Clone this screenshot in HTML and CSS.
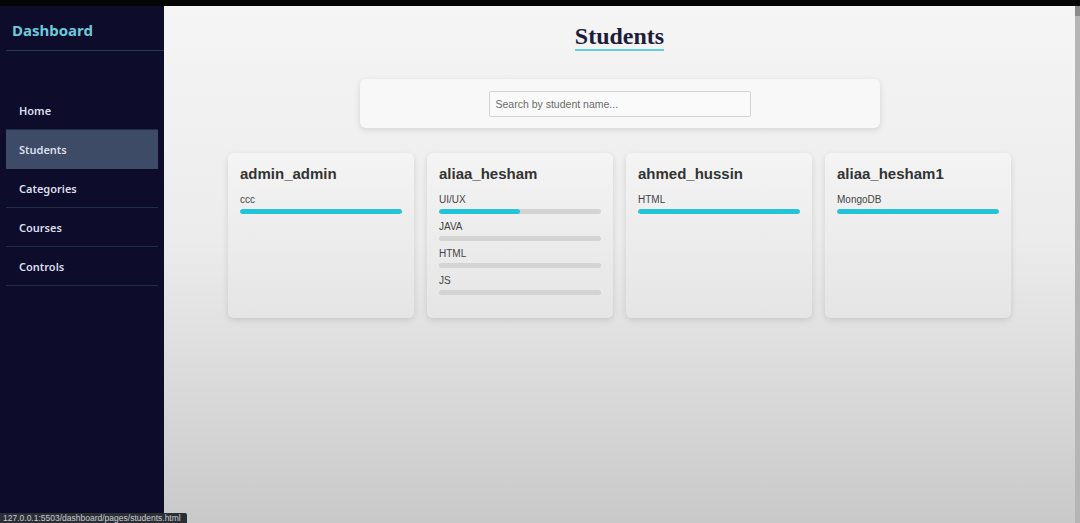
FILE: index.html
```html
<!DOCTYPE html>
<html>
<head>
<meta charset="utf-8">
<link rel="stylesheet" href="styles.css">
</head>
<body>
<div class="topbar"></div>
<div class="app">
  <aside class="sidebar">
    <div class="brand">Dashboard</div>
    <nav class="nav">
      <a class="nav-item">Home</a>
      <a class="nav-item active">Students</a>
      <a class="nav-item">Categories</a>
      <a class="nav-item">Courses</a>
      <a class="nav-item">Controls</a>
    </nav>
  </aside>
  <main class="main">
    <h1 class="title">Students</h1>
    <div class="search-panel">
      <input class="search" type="text" placeholder="Search by student name...">
    </div>
    <div class="cards">
      <div class="card">
        <div class="name">admin_admin</div>
        <div class="skill"><div class="label">ccc</div><div class="track"><div class="fill" style="width:100%"></div></div></div>
      </div>
      <div class="card">
        <div class="name">aliaa_hesham</div>
        <div class="skill"><div class="label">UI/UX</div><div class="track"><div class="fill" style="width:50%"></div></div></div>
        <div class="skill"><div class="label">JAVA</div><div class="track"><div class="fill" style="width:0%"></div></div></div>
        <div class="skill"><div class="label">HTML</div><div class="track"><div class="fill" style="width:0%"></div></div></div>
        <div class="skill"><div class="label">JS</div><div class="track"><div class="fill" style="width:0%"></div></div></div>
      </div>
      <div class="card">
        <div class="name">ahmed_hussin</div>
        <div class="skill"><div class="label">HTML</div><div class="track"><div class="fill" style="width:100%"></div></div></div>
      </div>
      <div class="card">
        <div class="name">aliaa_hesham1</div>
        <div class="skill"><div class="label">MongoDB</div><div class="track"><div class="fill" style="width:100%"></div></div></div>
      </div>
    </div>
  </main>
  <div class="scrollbar"><div class="thumb"></div></div>
</div>
<div class="status">127.0.0.1:5503/dashboard/pages/students.html</div>
</body>
</html>
```

FILE: styles.css
```css
* { box-sizing: border-box; }
html, body { margin: 0; padding: 0; height: 100%; overflow: hidden; }
body {
  width: 1080px;
  height: 523px;
  background: #000;
  font-family: "Liberation Sans", Arial, sans-serif;
  position: relative;
}
.topbar { height: 6px; background: #050505; }
.app { display: flex; height: 517px; }
.sidebar {
  width: 164px;
  flex: none;
  background: #0d0c2b;
  padding: 0 6px;
  font-family: "Noto Sans", "Open Sans", sans-serif;
}
.brand {
  height: 45px;
  padding: 14px 0 0 6px;
  color: #6ccadb;
  font-weight: 700;
  font-size: 15px;
  line-height: 20px;
  border-bottom: 1px solid #233a58;
  margin-right: -6px;
}
.nav { margin-top: 40px; display: flex; flex-direction: column; }
.nav-item {
  display: block;
  height: 39px;
  line-height: 40px;
  padding-left: 13px;
  color: #dcdfeb;
  font-size: 11px;
  font-weight: 600;
  border-bottom: 1px solid #1f2d4b;
}
.nav-item.active { background: #3d4b66; border-bottom-color: #3d4b66; }
.main {
  flex: 1;
  background: linear-gradient(#f5f5f5 0%, #ececec 45%, #c9c9c9 100%);
  display: flex;
  flex-direction: column;
  align-items: center;
}
.title {
  margin: 17px 0 0;
  font-family: "Liberation Serif", "Times New Roman", serif;
  font-size: 24px;
  line-height: 26px;
  color: #1d1d3b;
  font-weight: 700;
  padding-bottom: 0;
  border-bottom: 2px solid #62cfdf;
}
.search-panel {
  margin-top: 28px;
  width: 520px;
  height: 49px;
  background: #f8f8f8;
  border-radius: 6px;
  box-shadow: 0 2px 6px rgba(0,0,0,0.12);
  display: flex;
  align-items: center;
  justify-content: center;
}
.search {
  width: 262px;
  height: 26px;
  border: 1px solid #d2d2d2;
  border-radius: 2px;
  background: #fafafa;
  padding: 0 6px;
  font-family: "Liberation Sans", Arial, sans-serif;
  font-size: 10.5px;
  outline: none;
}
.search::placeholder { color: #6a6a6a; }
.cards {
  margin-top: 25px;
  display: flex;
  gap: 13px;
}
.card {
  width: 186px;
  height: 165px;
  border-radius: 6px;
  background: linear-gradient(#f4f4f4, #e5e5e5);
  box-shadow: 0 2px 6px rgba(0,0,0,0.12);
  padding: 12px 12px;
}
.name {
  font-size: 15px;
  line-height: 18px;
  font-weight: 700;
  color: #333;
  margin-bottom: 11px;
}
.skill { margin-bottom: 7px; }
.label {
  font-size: 10px;
  line-height: 12px;
  color: #444;
}
.track {
  margin-top: 3px;
  height: 5px;
  border-radius: 3px;
  background: #d3d3d3;
  overflow: hidden;
}
.fill { height: 100%; background: #24c4d8; border-radius: 3px; }
.scrollbar {
  width: 5px;
  flex: none;
  background: #8a8a8a;
  padding-top: 10px;
}
.thumb { height: 100%; background: #b5b5b5; }
.status {
  position: absolute;
  left: 0;
  bottom: 0;
  width: 187px;
  white-space: nowrap;
  height: 10px;
  padding: 0 3px;
  background: #2b2f35;
  color: #c9ccd2;
  font-size: 8.5px;
  line-height: 10px;
  border-top-right-radius: 2px;
}
```
